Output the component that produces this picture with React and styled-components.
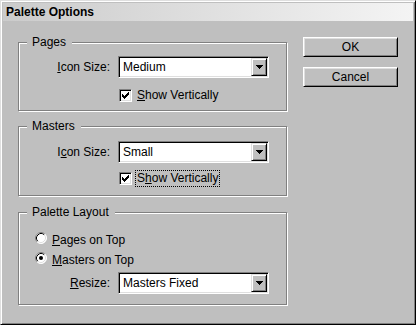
import React from 'react';
import styled, { createGlobalStyle } from 'styled-components';

const Global = createGlobalStyle`
  html, body { margin: 0; padding: 0; background: #bfbfbf; }
  body { font-family: "Liberation Sans", Arial, sans-serif; font-size: 12px; color: #000; }
  * { box-sizing: border-box; }
`;

const Window = styled.div`
  width: 416px;
  height: 325px;
  background: #bfbfbf;
  border: 1px solid;
  border-color: #dfdfdf #000 #000 #dfdfdf;
  box-shadow: inset 1px 1px 0 #fff, inset -1px -1px 0 #808080;
  padding: 2px;
  display: flex;
  flex-direction: column;
`;

const TitleBar = styled.div`
  height: 18px;
  flex: none;
  background: linear-gradient(to right, #cbcbcb, #f4f4f4);
  display: flex;
  align-items: center;
  padding-left: 3px;
  font-weight: bold;
  font-size: 12px;
`;

const Body = styled.div`
  display: flex;
  padding-left: 15px;
`;

const LeftCol = styled.div`
  width: 269px;
  display: flex;
  flex-direction: column;
  padding-top: 21px;
`;

const RightCol = styled.div`
  margin-left: 16px;
  padding-top: 16px;
  display: flex;
  flex-direction: column;
  gap: 10px;
`;

const Group = styled.div`
  position: relative;
  height: ${p => p.$h}px;
  margin-top: ${p => p.$mt}px;
  border: 1px solid #808080;
  box-shadow: inset 1px 1px 0 #fff, 1px 1px 0 #fff;
  padding-top: ${p => p.$pt}px;
`;

const Legend = styled.span`
  position: absolute;
  top: -8px;
  left: 8px;
  padding: 0 6px 0 5px;
  line-height: 14px;
  background: #bfbfbf;
`;

const FormGrid = styled.div`
  display: grid;
  grid-template-columns: 91px 151px;
  column-gap: 8px;
  align-items: center;
`;

const FieldLabel = styled.span`
  text-align: right;
  white-space: nowrap;
`;

const Key = styled.span`
  text-decoration: underline;
  text-underline-offset: 1px;
`;

const SelectBox = styled.div`
  position: relative;
  width: 151px;
  height: 22px;
  background: #fff;
  border: 1px solid;
  border-color: #808080 #fff #fff #808080;
  box-shadow: inset 1px 1px 0 #000, inset -1px -1px 0 #dfdfdf;
  padding: 2px 2px 2px 4px;
  display: flex;
  align-items: center;
  justify-content: space-between;
`;

const SelectText = styled.span`
  line-height: 14px;
`;

const DropButton = styled.div`
  width: 16px;
  height: 18px;
  margin-right: -1px;
  background: #bfbfbf;
  border: 1px solid;
  border-color: #dfdfdf #000 #000 #dfdfdf;
  box-shadow: inset 1px 1px 0 #fff, inset -1px -1px 0 #808080;
  display: flex;
  align-items: center;
  justify-content: center;
`;

const CheckRow = styled.div`
  grid-column: 2;
  display: flex;
  align-items: center;
  gap: 3px;
  padding-left: 1px;
  margin-top: ${p => p.$mt}px;
`;

const CheckBox = styled.div`
  width: 13px;
  height: 13px;
  flex: none;
  background: #fff;
  border: 1px solid;
  border-color: #808080 #fff #fff #808080;
  box-shadow: inset 1px 1px 0 #000, inset -1px -1px 0 #dfdfdf;
  display: flex;
  align-items: center;
  justify-content: center;
`;

const OptionLabel = styled.span`
  border: 1px dotted ${p => (p.$focus ? '#000' : 'transparent')};
  padding: 0 1px;
  line-height: 15px;
  white-space: nowrap;
`;

const RadioList = styled.div`
  display: flex;
  flex-direction: column;
  padding-left: 16px;
`;

const RadioRow = styled.div`
  height: 20px;
  display: flex;
  align-items: flex-start;
  gap: 3px;
`;

const Button = styled.div`
  width: 95px;
  height: 20px;
  background: #bfbfbf;
  border: 1px solid;
  border-color: #fff #000 #000 #fff;
  box-shadow: inset 1px 1px 0 #dfdfdf, inset -1px -1px 0 #808080;
  display: flex;
  align-items: center;
  justify-content: center;
  padding-bottom: 1px;
`;

const Arrow = () => (
  <svg width="7" height="4" viewBox="0 0 7 4" shapeRendering="crispEdges">
    <polygon points="0,0 7,0 3.5,4" fill="#000" />
  </svg>
);

const CheckMark = () => (
  <svg width="7" height="7" viewBox="0 0 7 7" shapeRendering="crispEdges">
    {[2, 3, 4, 3, 2, 1, 0].map((t, i) => (
      <rect key={i} x={i} y={t} width="1" height="3" fill="#000" />
    ))}
  </svg>
);

const Radio = ({ checked }) => (
  <svg width="12" height="12" viewBox="0 0 12 12">
    <circle cx="6" cy="6" r="5.5" fill="#fff" />
    <path d="M2.11 9.89 A5.5 5.5 0 0 1 9.89 2.11" stroke="#808080" fill="none" />
    <path d="M9.89 2.11 A5.5 5.5 0 0 1 2.11 9.89" stroke="#fff" fill="none" />
    <path d="M2.82 9.18 A4.5 4.5 0 0 1 9.18 2.82" stroke="#000" fill="none" />
    <path d="M9.18 2.82 A4.5 4.5 0 0 1 2.82 9.18" stroke="#dfdfdf" fill="none" />
    {checked && <circle cx="6" cy="6" r="2" fill="#000" />}
  </svg>
);

const Select = ({ value }) => (
  <SelectBox>
    <SelectText>{value}</SelectText>
    <DropButton>
      <Arrow />
    </DropButton>
  </SelectBox>
);

export default function App() {
  return (
    <>
      <Global />
      <Window>
        <TitleBar>Palette Options</TitleBar>
        <Body>
          <LeftCol>
            <Group $mt={0} $h={69} $pt={13}>
              <Legend>Pages</Legend>
              <FormGrid>
                <FieldLabel><Key>I</Key>con Size:</FieldLabel>
                <Select value="Medium" />
                <CheckRow $mt={9}>
                  <CheckBox><CheckMark /></CheckBox>
                  <OptionLabel><Key>S</Key>how Vertically</OptionLabel>
                </CheckRow>
              </FormGrid>
            </Group>
            <Group $mt={15} $h={70} $pt={14}>
              <Legend>Masters</Legend>
              <FormGrid>
                <FieldLabel>I<Key>c</Key>on Size:</FieldLabel>
                <Select value="Small" />
                <CheckRow $mt={7}>
                  <CheckBox><CheckMark /></CheckBox>
                  <OptionLabel $focus>S<Key>h</Key>ow Vertically</OptionLabel>
                </CheckRow>
              </FormGrid>
            </Group>
            <Group $mt={16} $h={93} $pt={19}>
              <Legend>Palette Layout</Legend>
              <RadioList>
                <RadioRow>
                  <Radio />
                  <OptionLabel><Key>P</Key>ages on Top</OptionLabel>
                </RadioRow>
                <RadioRow>
                  <Radio checked />
                  <OptionLabel><Key>M</Key>asters on Top</OptionLabel>
                </RadioRow>
              </RadioList>
              <FormGrid>
                <FieldLabel><Key>R</Key>esize:</FieldLabel>
                <Select value="Masters Fixed" />
              </FormGrid>
            </Group>
          </LeftCol>
          <RightCol>
            <Button>OK</Button>
            <Button>Cancel</Button>
          </RightCol>
        </Body>
      </Window>
    </>
  );
}
